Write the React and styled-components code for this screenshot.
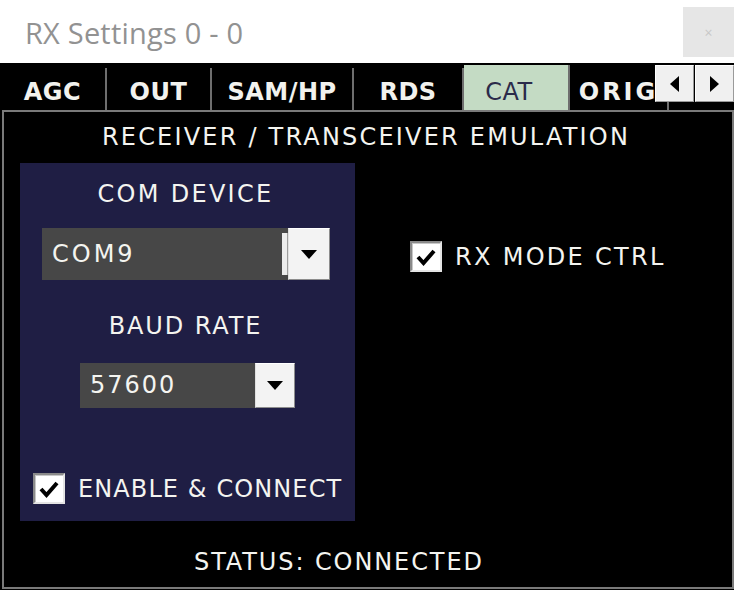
import React from 'react';
import styled, { createGlobalStyle } from 'styled-components';

const Global = createGlobalStyle`
  html, body { margin: 0; padding: 0; background: #fff; }
  body { width: 734px; height: 590px; overflow: hidden; font-family: "DejaVu Sans", Verdana, sans-serif; }
  * { box-sizing: border-box; }
`;

const Window = styled.div`
  width: 734px;
  height: 590px;
  display: flex;
  flex-direction: column;
  background: #fff;
`;

const Header = styled.header`
  height: 63px;
  flex: none;
  display: flex;
  align-items: flex-start;
  justify-content: space-between;
`;

const Title = styled.h1`
  margin: 0;
  padding: 13px 0 0 25px;
  font-family: "Open Sans", "Noto Sans", sans-serif;
  font-weight: 400;
  font-size: 29px;
  line-height: 39px;
  letter-spacing: 0.2px;
  color: #929292;
`;

const CloseButton = styled.button`
  margin-top: 7px;
  width: 51px;
  height: 50px;
  border: none;
  background: #e6e6e6;
  color: #c8c8c8;
  font-size: 14px;
  font-family: "Open Sans", sans-serif;
  padding: 0;
`;

const Body = styled.div`
  flex: 1;
  background: #000;
  display: flex;
  flex-direction: column;
  padding: 0 0 1px 2px;
`;

const TabStrip = styled.nav`
  height: 47px;
  flex: none;
  position: relative;
  display: flex;
  align-items: flex-end;
  overflow: hidden;
  margin-left: -2px;
`;

const Tab = styled.div`
  flex: none;
  width: ${p => p.$w}px;
  height: ${p => (p.$active ? 45 : 42)}px;
  padding-top: ${p => (p.$active ? 13 : 10)}px;
  padding-right: ${p => (p.$active ? 14 : 0)}px;
  border-right: 2px solid #6e6e6e;
  background: ${p => (p.$active ? '#c4dbc4' : 'transparent')};
  color: ${p => (p.$active ? '#2b2b4a' : '#f2f2ee')};
  font-weight: ${p => (p.$active ? 400 : 700)};
  font-size: 24px;
  line-height: 28px;
  letter-spacing: ${p => p.$ls ?? 0.5}px;
  text-align: center;
  white-space: nowrap;
`;

const Arrows = styled.div`
  position: absolute;
  right: 0;
  top: 2px;
  display: flex;
  gap: 1px;
`;

const ArrowButton = styled.div`
  width: 39px;
  height: 37px;
  background: #f0f0f0;
  border: 1px solid;
  border-color: #ffffff #9a9a9a #9a9a9a #ffffff;
  display: flex;
  align-items: center;
  justify-content: center;
`;

const Panel = styled.section`
  flex: 1;
  border: 2px solid #7a7a7a;
  display: flex;
  flex-direction: column;
`;

const Caption = styled.div`
  font-size: ${p => p.$size ?? 24}px;
  line-height: 28px;
  letter-spacing: ${p => p.$ls ?? 2}px;
  color: #f4f4f0;
  white-space: nowrap;
`;

const Heading = styled(Caption)`
  padding-top: 11px;
  text-align: center;
  padding-right: 4px;
`;

const ContentRow = styled.div`
  display: flex;
  margin: 12px 0 0 16px;
`;

const Group = styled.div`
  width: 335px;
  height: 358px;
  background: #1f1e44;
  display: flex;
  flex-direction: column;
  align-items: center;
  padding: 17px 0 17px;
`;

const GroupTitle = styled(Caption)`
  margin-top: ${p => p.$mt ?? 0}px;
  padding-right: 4px;
`;

const Combo = styled.div`
  margin-top: ${p => p.$mt}px;
  width: ${p => p.$w}px;
  height: ${p => p.$h}px;
  display: flex;
  background: #474747;
  ${p => (p.$left != null ? `align-self: flex-start; margin-left: ${p.$left}px;` : '')}
`;

const ComboText = styled(Caption)`
  flex: 1;
  padding-left: 10px;
  line-height: ${p => p.$h}px;
`;

const Sliver = styled.div`
  width: 6px;
  margin: 5px 0;
  background: #ececec;
  border-right: 1px solid #9c9c9c;
`;

const ComboButton = styled.div`
  width: ${p => p.$w}px;
  background: #f3f3f3;
  border: 1px solid;
  border-color: #ffffff #8c8c8c #8c8c8c #e0e0e0;
  display: flex;
  align-items: center;
  justify-content: center;
`;

const CheckRow = styled.label`
  display: flex;
  align-items: center;
  gap: 13px;
  ${p => (p.$bottom ? 'align-self: flex-start; margin-top: auto; margin-left: 13px;' : '')}
`;

const CheckBox = styled.div`
  width: 32px;
  height: 31px;
  background: #fff;
  border: 2px solid;
  border-color: #8a8a8a #e4e4e4 #e4e4e4 #8a8a8a;
  box-shadow: inset 1px 1px 0 #c8c8c8;
  display: flex;
  align-items: center;
  justify-content: center;
`;

const RightCol = styled.div`
  margin-left: 55px;
  padding-top: 78px;
`;

const Status = styled(Caption)`
  margin-top: 27px;
  padding-left: 190px;
`;

const DownTri = () => (
  <svg width="16" height="9" viewBox="0 0 16 9"><path d="M0 0H16L8 9Z" fill="#000" /></svg>
);

const Check = () => (
  <svg width="20" height="18" viewBox="0 0 20 18">
    <path d="M2 9 L7.5 15 L18 3" fill="none" stroke="#000" strokeWidth="4" strokeLinejoin="miter" />
  </svg>
);

const tabs = [
  { label: 'AGC', w: 107 },
  { label: 'OUT', w: 105 },
  { label: 'SAM/HP', w: 142 },
  { label: 'RDS', w: 110 },
  { label: 'CAT', w: 106, active: true },
  { label: 'ORIG', w: 99, ls: 3 },
  { label: '', w: 120 },
];

export default function App() {
  return (
    <Window>
      <Global />
      <Header>
        <Title>RX Settings 0 - 0</Title>
        <CloseButton>×</CloseButton>
      </Header>
      <Body>
        <TabStrip>
          {tabs.map((t, i) => (
            <Tab key={i} $w={t.w} $active={t.active} $ls={t.ls}>{t.label}</Tab>
          ))}
          <Arrows>
            <ArrowButton>
              <svg width="9" height="16" viewBox="0 0 9 16"><path d="M9 0V16L0 8Z" fill="#000" /></svg>
            </ArrowButton>
            <ArrowButton>
              <svg width="9" height="16" viewBox="0 0 9 16"><path d="M0 0V16L9 8Z" fill="#000" /></svg>
            </ArrowButton>
          </Arrows>
        </TabStrip>
        <Panel>
          <Heading $ls={2.2}>RECEIVER / TRANSCEIVER EMULATION</Heading>
          <ContentRow>
            <Group>
              <GroupTitle $ls={2.3}>COM DEVICE</GroupTitle>
              <Combo $mt={20} $w={288} $h={52} $left={22}>
                <ComboText $h={52} $ls={3}>COM9</ComboText>
                <Sliver />
                <ComboButton $w={42}><DownTri /></ComboButton>
              </Combo>
              <GroupTitle $mt={32} $ls={1.9}>BAUD RATE</GroupTitle>
              <Combo $mt={23} $w={215} $h={45}>
                <ComboText $h={45} $ls={2}>57600</ComboText>
                <ComboButton $w={40}><DownTri /></ComboButton>
              </Combo>
              <CheckRow $bottom>
                <CheckBox><Check /></CheckBox>
                <Caption $ls={1.1}>ENABLE &amp; CONNECT</Caption>
              </CheckRow>
            </Group>
            <RightCol>
              <CheckRow>
                <CheckBox><Check /></CheckBox>
                <Caption $ls={2.3}>RX MODE CTRL</Caption>
              </CheckRow>
            </RightCol>
          </ContentRow>
          <Status $ls={1.9}>STATUS: CONNECTED</Status>
        </Panel>
      </Body>
    </Window>
  );
}
